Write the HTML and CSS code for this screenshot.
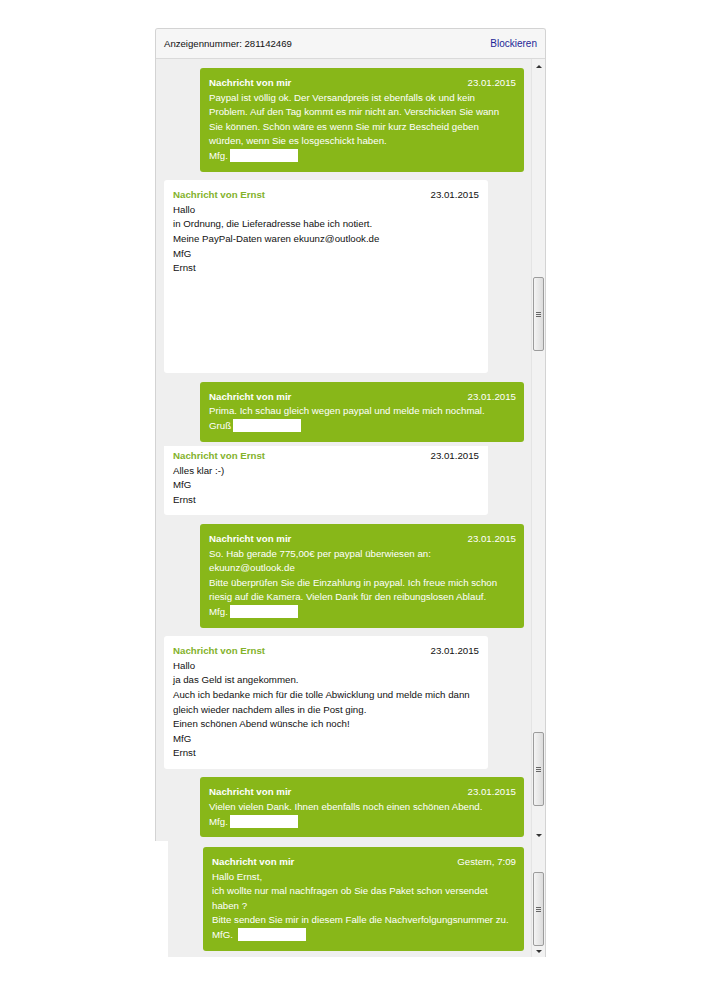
FILE: index.html
```html
<!DOCTYPE html>
<html lang="de">
<head>
    <meta charset="UTF-8">
    <meta name="viewport" content="width=device-width, initial-scale=1.0">
    <title>Nachrichten - Anzeige 281142469</title>
    <link rel="stylesheet" href="styles.css">
</head>
<body>
    <div class="stack">

        <!-- first capture: top of the conversation -->
        <section class="shot shot-first">
            <header class="conv-head">
                <span>Anzeigennummer: 281142469</span>
                <a href="#" class="block-link">Blockieren</a>
            </header>
            <div class="shot-body">
                <div class="feed">
                    <div class="msg mine">
                        <div class="msg-head"><b>Nachricht von mir</b><span>23.01.2015</span></div>
                        <p>Paypal ist völlig ok. Der Versandpreis ist ebenfalls ok und kein<br>
                        Problem. Auf den Tag kommt es mir nicht an. Verschicken Sie wann<br>
                        Sie können. Schön wäre es wenn Sie mir kurz Bescheid geben<br>
                        würden, wenn Sie es losgeschickt haben.<br>
                        Mfg.<span class="redacted"></span></p>
                    </div>
                    <div class="msg theirs tall">
                        <div class="msg-head"><b>Nachricht von Ernst</b><span>23.01.2015</span></div>
                        <p>Hallo<br>
                        in Ordnung, die Lieferadresse habe ich notiert.<br>
                        Meine PayPal-Daten waren ekuunz@outlook.de<br>
                        MfG<br>
                        Ernst</p>
                    </div>
                    <div class="msg mine">
                        <div class="msg-head"><b>Nachricht von mir</b><span>23.01.2015</span></div>
                        <p>Prima. Ich schau gleich wegen paypal und melde mich nochmal.<br>
                        Gruß<span class="redacted"></span></p>
                    </div>
                </div>
                <div class="scrollbar">
                    <span class="arrow up"></span>
                    <span class="thumb" style="margin-top: 206px"><i></i></span>
                </div>
            </div>
        </section>

        <!-- second capture: scrolled further down -->
        <section class="shot shot-mid">
            <div class="shot-body">
                <div class="feed">
                    <div class="msg theirs cut">
                        <div class="msg-head"><b>Nachricht von Ernst</b><span>23.01.2015</span></div>
                        <p>Alles klar :-)<br>
                        MfG<br>
                        Ernst</p>
                    </div>
                    <div class="msg mine">
                        <div class="msg-head"><b>Nachricht von mir</b><span>23.01.2015</span></div>
                        <p>So. Hab gerade 775,00€ per paypal überwiesen an:<br>
                        ekuunz@outlook.de<br>
                        Bitte überprüfen Sie die Einzahlung in paypal. Ich freue mich schon<br>
                        riesig auf die Kamera. Vielen Dank für den reibungslosen Ablauf.<br>
                        Mfg.<span class="redacted"></span></p>
                    </div>
                    <div class="msg theirs">
                        <div class="msg-head"><b>Nachricht von Ernst</b><span>23.01.2015</span></div>
                        <p>Hallo<br>
                        ja das Geld ist angekommen.<br>
                        Auch ich bedanke mich für die tolle Abwicklung und melde mich dann<br>
                        gleich wieder nachdem alles in die Post ging.<br>
                        Einen schönen Abend wünsche ich noch!<br>
                        MfG<br>
                        Ernst</p>
                    </div>
                    <div class="msg mine">
                        <div class="msg-head"><b>Nachricht von mir</b><span>23.01.2015</span></div>
                        <p>Vielen vielen Dank. Ihnen ebenfalls noch einen schönen Abend.<br>
                        Mfg.<span class="redacted"></span></p>
                    </div>
                </div>
                <div class="scrollbar">
                    <span class="thumb" style="margin-top: 286px"><i></i></span>
                    <span class="arrow down"></span>
                </div>
            </div>
        </section>

        <!-- third capture: latest message -->
        <section class="shot shot-last">
            <div class="shot-body">
                <div class="feed">
                    <div class="msg mine">
                        <div class="msg-head"><b>Nachricht von mir</b><span>Gestern, 7:09</span></div>
                        <p>Hallo Ernst,<br>
                        ich wollte nur mal nachfragen ob Sie das Paket schon versendet<br>
                        haben ?<br>
                        Bitte senden Sie mir in diesem Falle die Nachverfolgungsnummer zu.<br>
                        MfG. <span class="redacted"></span></p>
                    </div>
                </div>
                <div class="scrollbar">
                    <span class="thumb" style="margin-top: 31px"><i></i></span>
                    <span class="arrow down"></span>
                </div>
            </div>
        </section>

    </div>
</body>
</html>
```

FILE: styles.css
```css
* {
    box-sizing: border-box;
}
body {
    margin: 0;
    background-color: #fff;
    font-family: 'Liberation Sans', Arial, sans-serif;
    font-size: 9.7px;
    color: #111;
}
.stack {
    width: 391px;
    margin-left: 155px;
    padding-top: 28px;
}
.shot {
    background-color: #efefef;
    border-left: 1px solid #d3d3d3;
    border-right: 1px solid #d3d3d3;
    overflow: hidden;
    display: flex;
    flex-direction: column;
}
.shot-first {
    height: 418px;
    border-top: 1px solid #d3d3d3;
    border-radius: 3px 3px 0 0;
}
.shot-mid {
    height: 395px;
}
.shot-last {
    height: 116px;
    margin-left: 13px;
    border-left: none;
}
.conv-head {
    height: 30px;
    flex: none;
    display: flex;
    align-items: center;
    justify-content: space-between;
    padding: 0 8px 0 8px;
    background-color: #f6f6f6;
    border-bottom: 1px solid #dadada;
    font-size: 9.6px;
}
.block-link {
    color: #1d2797;
    text-decoration: none;
    font-size: 10px;
}
.shot-body {
    flex: 1;
    display: flex;
    min-height: 0;
}
.feed {
    flex: 1;
    display: flex;
    flex-direction: column;
    gap: 8.6px;
    padding-top: 9px;
}
.shot-mid .feed {
    padding-top: 0;
}
.shot-last .feed {
    padding-top: 6px;
}
.msg {
    width: 324px;
    padding: 8px 8px 8px 9px;
    border-radius: 3px;
    line-height: 14.6px;
    flex: none;
}
.msg p {
    margin: 0;
    white-space: nowrap;
}
.msg-head {
    display: flex;
    justify-content: space-between;
}
.msg-head b {
    font-weight: bold;
}
.mine {
    align-self: flex-end;
    margin-right: 7px;
    background-color: #88b719;
    color: #fff;
}
.shot-last .mine {
    width: 321px;
}
.theirs {
    margin-left: 8px;
    background-color: #fff;
    color: #111;
}
.theirs .msg-head span {
    margin-right: 1px;
}
.theirs .msg-head b {
    color: #83b22a;
}
.tall {
    min-height: 193px;
}
.cut {
    padding-top: 3px;
    border-radius: 0 0 3px 3px;
}
.redacted {
    display: inline-block;
    width: 68px;
    height: 13px;
    margin-left: 2px;
    vertical-align: -3px;
    background-color: #fff;
}
.scrollbar {
    width: 14px;
    flex: none;
    display: flex;
    flex-direction: column;
    align-items: center;
    background-color: #f2f2f2;
    border-left: 1px solid #e4e4e4;
}
.arrow {
    width: 0;
    height: 0;
    border-left: 3px solid transparent;
    border-right: 3px solid transparent;
}
.arrow.up {
    margin: 6px 0 3px;
    border-bottom: 3px solid #333;
}
.arrow.down {
    margin: auto 0 4px;
    border-top: 3px solid #333;
}
.thumb {
    width: 11px;
    height: 74px;
    flex: none;
    display: flex;
    align-items: center;
    justify-content: center;
    border: 1px solid #9c9c9c;
    border-radius: 2px;
    background: linear-gradient(to right, #f4f4f4, #dcdcdc);
}
.thumb i {
    width: 5px;
    height: 5px;
    border-top: 1px solid #666;
    border-bottom: 1px solid #666;
    background: linear-gradient(#666, #666) center / 100% 1px no-repeat;
}
```
